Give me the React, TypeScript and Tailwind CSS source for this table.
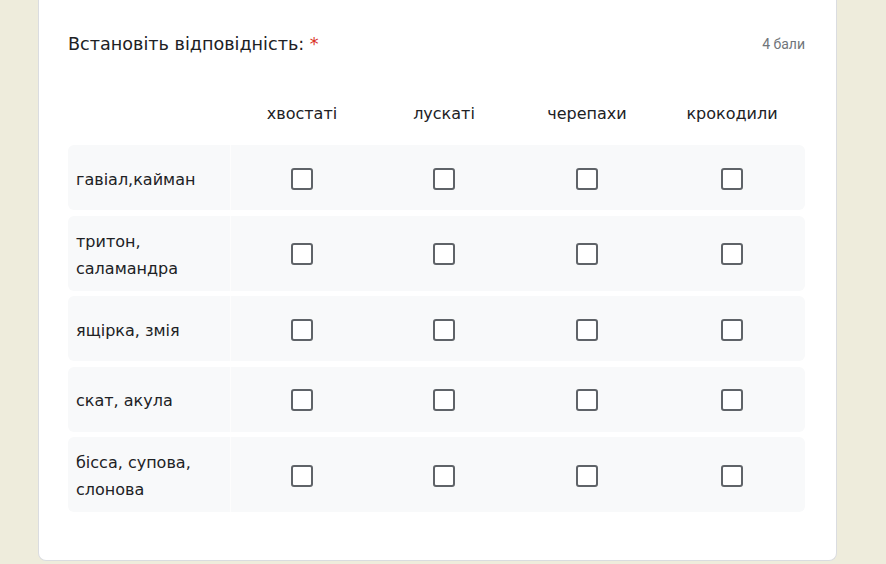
const columns = ["хвостаті", "лускаті", "черепахи", "крокодили"];

const rows = [
  { label: ["гавіал,кайман"], tall: false },
  { label: ["тритон,", "саламандра"], tall: true },
  { label: ["ящірка, змія"], tall: false },
  { label: ["скат, акула"], tall: false },
  { label: ["бісса, супова,", "слонова"], tall: true },
];

const gridCols = "grid-cols-[163px_142px_142px_144px_1fr]";

function Box() {
  return (
    <div className="h-[22px] w-[22px] rounded-[3px] border-2 border-[#5f6368] bg-white" />
  );
}

export default function App() {
  return (
    <div className="h-[564px] w-[886px] overflow-hidden bg-[#eeecdc] pl-[38px] font-['DejaVu_Sans',sans-serif] text-[#202124]">
      <div className="h-[561px] w-[799px] rounded-b-lg border-x border-b border-[#dadce0] bg-white pl-[29px] pr-[31px] pt-[32px]">
        <div className="flex h-[24px] items-center justify-between">
          <div className="text-[17.6px] leading-6">
            Встановіть відповідність:{" "}
            <span className="text-[#d93025]">*</span>
          </div>
          <div className="font-['Roboto',sans-serif] text-[14px] text-[#70757a]">
            4 бали
          </div>
        </div>

        <div className={"mt-[42px] grid h-[32px] items-center text-[16px] " + gridCols}>
          <div />
          {columns.map((c) => (
            <div key={c} className="text-center">
              {c}
            </div>
          ))}
        </div>

        <div className="mt-[15px] flex flex-col gap-[5.5px]">
          {rows.map((r, i) => (
            <div
              key={i}
              className={
                "grid items-center rounded-md bg-[#f8f9fa] " +
                gridCols +
                " " +
                (r.tall ? "h-[75px]" : "h-[65px]")
              }
            >
              <div className="flex h-full flex-col justify-center border-r border-[#fdfdfd] pl-2 pt-[3px] text-[16px] leading-[27px]">
                {r.label.map((l) => (
                  <div key={l}>{l}</div>
                ))}
              </div>
              {columns.map((c) => (
                <div key={c} className="flex justify-center pt-[2px]">
                  <Box />
                </div>
              ))}
            </div>
          ))}
        </div>
      </div>
    </div>
  );
}
